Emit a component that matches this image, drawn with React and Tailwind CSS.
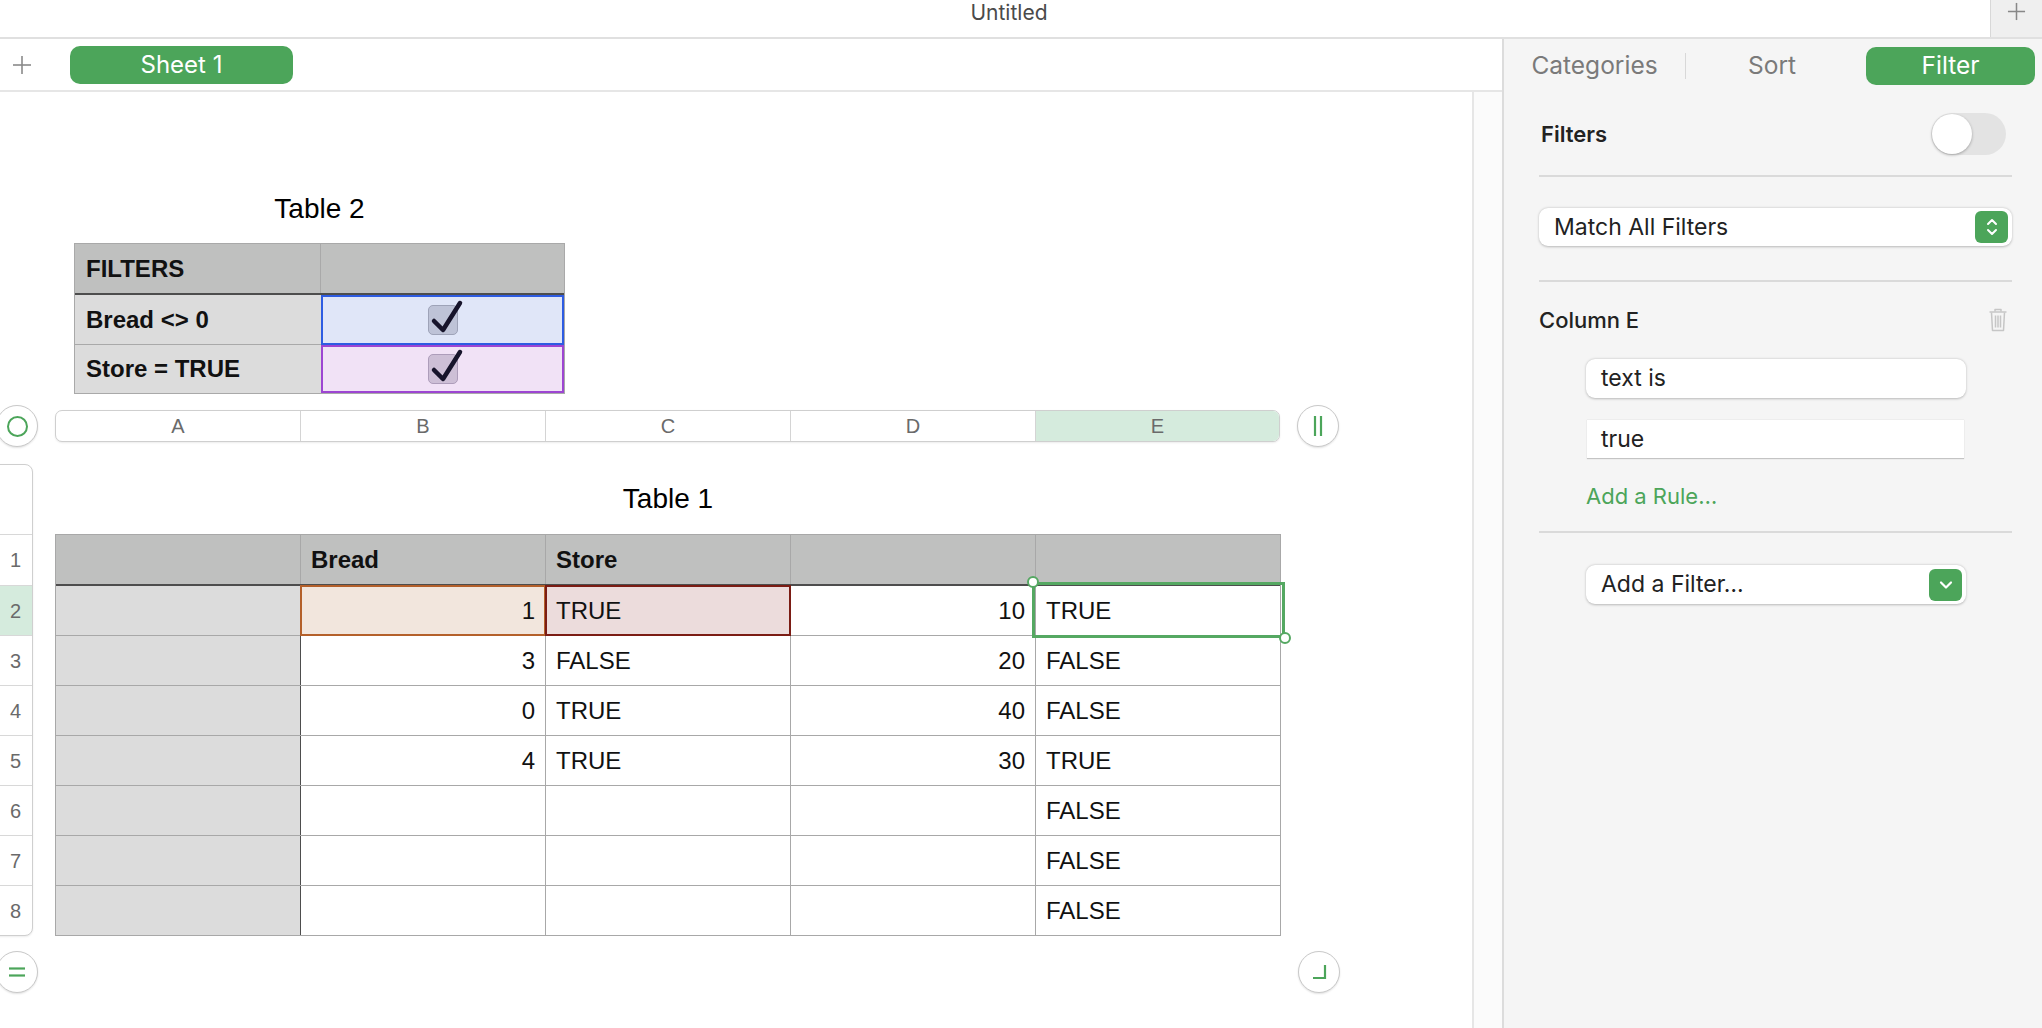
import React from 'react';

const TF = "font-['Liberation_Sans',Arial,sans-serif]";
const UF = "font-['Inter','Noto_Sans',sans-serif]";

function CheckBox({ bg, border }) {
  return (
    <div className={`relative w-[30px] h-[30px] rounded-[5px] border ${border} ${bg}`}>
      <svg className="absolute left-0 top-0 overflow-visible" width="30" height="30" viewBox="0 0 30 30">
        <path d="M5 15 L14 24 L31 -3" fill="none" stroke="#17142b" strokeWidth="4.5" strokeLinecap="round" strokeLinejoin="round" />
      </svg>
    </div>
  );
}

function Circle({ children, className = '' }) {
  return (
    <div className={`w-[42px] h-[42px] shrink-0 rounded-full border border-[#c9c9c9] bg-white shadow-[0_1px_2px_rgba(0,0,0,0.12)] flex items-center justify-center ${className}`}>
      {children}
    </div>
  );
}

const data = [
  ['', '1', 'TRUE', '10', 'TRUE'],
  ['', '3', 'FALSE', '20', 'FALSE'],
  ['', '0', 'TRUE', '40', 'FALSE'],
  ['', '4', 'TRUE', '30', 'TRUE'],
  ['', '', '', '', 'FALSE'],
  ['', '', '', '', 'FALSE'],
  ['', '', '', '', 'FALSE'],
];

function Table2() {
  return (
    <div className="ml-[74px] mt-[100px] w-[491px]">
      <div className={`h-[34px] text-center text-[28px] leading-[34px] text-black ${TF}`}>Table 2</div>
      <div className={`mt-[17px] border border-[#a9a9a9] ${TF} text-[24px] text-[#111]`}>
        <div className="flex h-[51px] bg-[#bfc0bf] border-b-2 border-[#4d4d4d]">
          <div className="w-[246px] border-r border-[#a9a9a9] flex items-center pl-[11px] font-bold">FILTERS</div>
          <div className="flex-1" />
        </div>
        <div className="flex h-[50px]">
          <div className="w-[246px] bg-[#dcdcdc] border-b border-[#a9a9a9] flex items-center pl-[11px] font-bold">Bread &lt;&gt; 0</div>
          <div className="flex-1 border-2 border-[#2e5ce2] bg-[#e0e6f8] flex items-center justify-center">
            <CheckBox bg="bg-[#bec3d7]" border="border-[#9ea3b8]" />
          </div>
        </div>
        <div className="flex h-[48px]">
          <div className="w-[246px] bg-[#dcdcdc] flex items-center pl-[11px] font-bold">Store = TRUE</div>
          <div className="flex-1 border-2 border-[#9d45d2] bg-[#f1e2f6] flex items-center justify-center">
            <CheckBox bg="bg-[#cdbfd6]" border="border-[#ad9dba]" />
          </div>
        </div>
      </div>
    </div>
  );
}

function ColumnBar() {
  const cols = ['A', 'B', 'C', 'D', 'E'];
  return (
    <div className="flex items-center mt-[11px]">
      <Circle className="ml-[-4px]">
        <div className="w-[21px] h-[21px] rounded-full border-[2.5px] border-[#4ca55a]" />
      </Circle>
      <div className={`ml-[17px] w-[1225px] h-[32px] flex border border-[#cfcfcf] rounded-[7px] overflow-hidden bg-white shadow-[0_1px_2px_rgba(0,0,0,0.08)] ${TF}`}>
        {cols.map((c, i) => (
          <div
            key={c}
            className={`w-[245px] flex items-center justify-center text-[20px] text-[#6a6a6a] ${i < 4 ? 'border-r border-[#d4d4d4]' : 'flex-1 bg-[#d5ebdd]'}`}
          >
            {c}
          </div>
        ))}
      </div>
      <Circle className="ml-[17px]">
        <svg width="16" height="24" viewBox="0 0 16 24">
          <line x1="5" y1="2" x2="5" y2="22" stroke="#4ca55a" strokeWidth="2.2" />
          <line x1="11" y1="2" x2="11" y2="22" stroke="#4ca55a" strokeWidth="2.2" />
        </svg>
      </Circle>
    </div>
  );
}

function RowHeader() {
  const nums = [1, 2, 3, 4, 5, 6, 7, 8];
  return (
    <div className={`ml-[-10px] w-[43px] shrink-0 border border-[#cfcfcf] rounded-r-[8px] bg-white overflow-hidden shadow-[0_1px_2px_rgba(0,0,0,0.08)] ${TF}`}>
      <div className="h-[69px]" />
      {nums.map((n, i) => (
        <div
          key={n}
          className={`${i === 0 ? 'h-[51px]' : 'h-[50px]'} border-t border-[#d8d8d8] flex items-center justify-center pl-[8px] text-[20px] text-[#6a6a6a] ${n === 2 ? 'bg-[#d5ebdd]' : ''}`}
        >
          {n}
        </div>
      ))}
    </div>
  );
}

function Table1() {
  return (
    <div className="ml-[22px] w-[1226px]">
      <div className={`h-[70px] flex items-center justify-center text-[28px] text-black ${TF}`}>Table 1</div>
      <div className={`border border-[#a8a8a8] ${TF} text-[24px] text-[#111]`}>
        <div className="flex h-[51px] bg-[#bfc0bf] border-b-2 border-[#4d4d4d]">
          <div className="w-[245px] border-r border-[#a8a8a8]" />
          <div className="w-[245px] border-r border-[#a8a8a8] flex items-center pl-[10px] font-bold">Bread</div>
          <div className="w-[245px] border-r border-[#a8a8a8] flex items-center pl-[10px] font-bold">Store</div>
          <div className="w-[245px] border-r border-[#a8a8a8]" />
          <div className="flex-1" />
        </div>
        {data.map((r, ri) => (
          <div key={ri} className={`flex ${ri === 6 ? 'h-[49px]' : 'h-[50px] border-b border-[#a8a8a8]'}`}>
            <div className="w-[245px] bg-[#dcdcdc] border-r border-[#4d4d4d]" />
            <div className="relative w-[245px] border-r border-[#a8a8a8] flex items-center justify-end pr-[10px]">
              {ri === 0 && <div className="absolute inset-[-1px] border-2 border-[#b4602a] bg-[#f2e6dd]" />}
              <span className="relative">{r[1]}</span>
            </div>
            <div className="relative w-[245px] border-r border-[#a8a8a8] flex items-center pl-[10px]">
              {ri === 0 && <div className="absolute inset-[-1px] border-2 border-[#7b1c14] bg-[#ecdcdc]" />}
              <span className="relative">{r[2]}</span>
            </div>
            <div className="w-[245px] border-r border-[#a8a8a8] flex items-center justify-end pr-[10px]">{r[3]}</div>
            <div className="relative flex-1 flex items-center pl-[10px]">
              {r[4]}
              {ri === 0 && (
                <>
                  <div className="absolute left-[-4px] top-[-4px] right-[-5px] bottom-[-3px] border-[3px] border-[#55a862]" />
                  <div className="absolute left-[-9px] top-[-10px] w-[12px] h-[12px] rounded-full bg-white border-2 border-[#55a862]" />
                  <div className="absolute right-[-11px] bottom-[-9px] w-[12px] h-[12px] rounded-full bg-white border-2 border-[#55a862]" />
                </>
              )}
            </div>
          </div>
        ))}
      </div>
    </div>
  );
}

function Canvas() {
  return (
    <div className="w-[1472px] h-full bg-white overflow-hidden flex flex-col">
      <Table2 />
      <ColumnBar />
      <div className="flex mt-[17px]">
        <RowHeader />
        <Table1 />
      </div>
      <div className="flex mt-[15px]">
        <Circle className="ml-[-4px]">
          <svg width="18" height="12" viewBox="0 0 18 12">
            <line x1="1" y1="2.5" x2="17" y2="2.5" stroke="#4ca55a" strokeWidth="2.2" />
            <line x1="1" y1="9.5" x2="17" y2="9.5" stroke="#4ca55a" strokeWidth="2.2" />
          </svg>
        </Circle>
        <Circle className="ml-[1260px]">
          <svg width="18" height="18" viewBox="0 0 18 18">
            <path d="M15 2 V15 H3" fill="none" stroke="#4ca55a" strokeWidth="2.2" />
          </svg>
        </Circle>
      </div>
    </div>
  );
}

function Plus({ size = 20, color = '#8a8a8a' }) {
  return (
    <svg width={size} height={size} viewBox="0 0 20 20">
      <line x1="10" y1="1" x2="10" y2="19" stroke={color} strokeWidth="1.6" />
      <line x1="1" y1="10" x2="19" y2="10" stroke={color} strokeWidth="1.6" />
    </svg>
  );
}

function Trash() {
  return (
    <svg width="20" height="24" viewBox="0 0 20 24" fill="none" stroke="#c6c6c6" strokeWidth="1.5" strokeLinejoin="round">
      <path d="M7 3.5 V1.5 H13 V3.5" />
      <path d="M1.5 4 H18.5" />
      <path d="M3.5 4.5 L4.5 22.5 H15.5 L16.5 4.5" />
      <path d="M7.5 7.5 V19.5 M10 7.5 V19.5 M12.5 7.5 V19.5" />
    </svg>
  );
}

function Panel() {
  return (
    <div className={`w-[540px] h-full bg-[#f5f5f5] border-l-2 border-[#dcdcdc] flex flex-col ${UF}`}>
      <div className="h-[53px] flex items-center shrink-0">
        <div className="w-[181px] text-center text-[24.5px] text-[#7a7a7a]">Categories</div>
        <div className="w-px h-[26px] bg-[#d8d8d8]" />
        <div className="w-[172px] text-center text-[24.5px] text-[#7a7a7a]">Sort</div>
        <div className="ml-[8px] w-[169px] h-[38px] rounded-[10px] bg-[#4ca55a] flex items-center justify-center text-[24.5px] text-white">Filter</div>
      </div>
      <div className="pl-[35px] pr-[30px] flex flex-col">
        <div className="mt-[21px] h-[42px] flex items-center justify-between">
          <div className="pl-[2px] text-[22px] font-semibold text-[#222]">Filters</div>
          <div className="mr-[6px] w-[75px] h-[42px] rounded-full bg-[#e3e3e3] p-[1px] flex items-center">
            <div className="w-[40px] h-[40px] rounded-full bg-white shadow-[0_1px_3px_rgba(0,0,0,0.3)]" />
          </div>
        </div>
        <div className="mt-[20px] h-[2px] bg-[#dadada]" />
        <div className="mt-[31px] h-[38px] rounded-[9px] bg-white shadow-[0_0.5px_2.5px_rgba(0,0,0,0.25)] flex items-center justify-between pl-[15px] pr-[4px]">
          <span className="text-[23px] text-[#222]">Match All Filters</span>
          <div className="w-[33px] h-[32px] rounded-[6px] bg-[#4ca55a] flex items-center justify-center">
            <svg width="14" height="22" viewBox="0 0 14 22" fill="none" stroke="white" strokeWidth="2" strokeLinecap="round" strokeLinejoin="round">
              <path d="M3 8 L7 4 L11 8" />
              <path d="M3 14 L7 18 L11 14" />
            </svg>
          </div>
        </div>
        <div className="mt-[34px] h-[2px] bg-[#dadada]" />
        <div className="mt-[24px] h-[28px] flex items-center justify-between">
          <span className="text-[22px] font-medium text-[#222]">Column E</span>
          <div className="mr-[4px]"><Trash /></div>
        </div>
        <div className="mt-[25px] ml-[47px] w-[380px] h-[39px] rounded-[9px] bg-white shadow-[0_0.5px_2.5px_rgba(0,0,0,0.25)] flex items-center pl-[15px] text-[23px] text-[#222]">text is</div>
        <div className="mt-[22px] ml-[48px] w-[377px] h-[39px] bg-white border-b border-[#c4c4c4] shadow-[0_0_1px_rgba(0,0,0,0.2)] flex items-center pl-[14px] text-[23px] text-[#222]">true</div>
        <div className="mt-[23px] ml-[47px] h-[28px] flex items-center text-[22px] text-[#4ca55a]">Add a Rule…</div>
        <div className="mt-[21px] h-[2px] bg-[#dadada]" />
        <div className="mt-[32px] ml-[47px] w-[380px] h-[39px] rounded-[9px] bg-white shadow-[0_0.5px_2.5px_rgba(0,0,0,0.25)] flex items-center justify-between pl-[15px] pr-[4px]">
          <span className="text-[23px] text-[#222]">Add a Filter…</span>
          <div className="w-[33px] h-[32px] rounded-[6px] bg-[#4ca55a] flex items-center justify-center">
            <svg width="14" height="10" viewBox="0 0 14 10" fill="none" stroke="white" strokeWidth="2.2" strokeLinecap="round" strokeLinejoin="round">
              <path d="M2 2.5 L7 7.5 L12 2.5" />
            </svg>
          </div>
        </div>
      </div>
    </div>
  );
}

export default function App() {
  return (
    <div className="w-[2042px] h-[1028px] bg-white overflow-hidden flex flex-col">
      <div className="h-[39px] shrink-0 flex border-b-2 border-[#e0e0e0]">
        <div className={`flex-1 flex justify-center pl-[28px] pt-[1px] ${UF}`}>
          <span className="text-[21px] leading-[24px] text-[#4a4a4a]">Untitled</span>
        </div>
        <div className="w-[52px] bg-[#efefef] border-l border-[#d8d8d8] flex justify-center pt-[2px]">
          <Plus size={19} color="#888" />
        </div>
      </div>
      <div className="flex flex-1 min-h-0">
        <div className="w-[1502px] flex flex-col">
          <div className="h-[53px] shrink-0 flex items-center border-b-2 border-[#e6e6e6]">
            <div className="ml-[12px]"><Plus size={20} color="#8a8a8a" /></div>
            <div className={`ml-[38px] w-[223px] h-[38px] rounded-[10px] bg-[#4ca55a] flex items-center justify-center text-[24px] text-white ${UF}`}>Sheet 1</div>
          </div>
          <div className="flex flex-1 min-h-0">
            <Canvas />
            <div className="w-[30px] bg-[#fbfbfb] border-l-2 border-[#e6e6e6]" />
          </div>
        </div>
        <div className="flex-1 min-h-0">
          <Panel />
        </div>
      </div>
    </div>
  );
}
